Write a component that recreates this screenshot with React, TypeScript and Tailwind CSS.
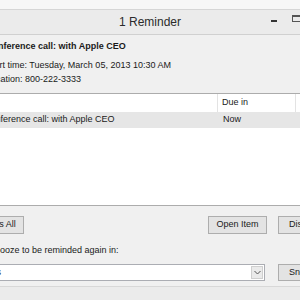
export default function App() {
  return (
    <div className="w-[300px] h-[300px] overflow-hidden bg-[#f0f0f0] text-[9px] text-[#1a1a1a] font-['Liberation_Sans',Arial,sans-serif]">
      <div className="h-[10px] bg-[#f7f7f7] border-b border-[#d6d6d6]" />
      <div className="h-[25px] bg-[#ebebeb] border-b border-[#d0d0d0] grid grid-cols-[1fr_auto_1fr]">
        <div />
        <div className="flex items-center text-[12px] text-[#2b2b2b] leading-none">1 Reminder</div>
        <div className="flex justify-end items-start gap-[15px] -mr-[1px]">
          <div className="mt-[10px] w-[6px] h-[2px] bg-[#333]" />
          <div className="mt-[5px] w-[9px] h-[7px] border border-[#555] border-t-2" />
        </div>
      </div>

      <div className="-ml-[44px] w-[389px] px-[8px]">
        <div className="pl-[22px] pt-[5px]">
          <div className="font-bold leading-[12px] whitespace-nowrap">Conference call: with Apple CEO</div>
          <div className="mt-[7px] leading-[12px] whitespace-nowrap">Start time: Tuesday, March 05, 2013 10:30 AM</div>
          <div className="mt-[2px] leading-[12px] whitespace-nowrap">Location: 800-222-3333</div>
        </div>

        <div className="mt-[8px] h-[113px] bg-white border border-[#acacac]">
          <div className="flex h-[18px] items-center">
            <div className="w-[253px] h-full border-r border-[#e3e3e3]" />
            <div className="w-[78px] h-full pl-[4px] flex items-center border-r border-[#e3e3e3]">Due in</div>
          </div>
          <div className="flex h-[16px] items-center bg-[#e6e6e6]">
            <div className="w-[253px] pl-[19px] whitespace-nowrap">Conference call: with Apple CEO</div>
            <div className="pl-[5px]">Now</div>
          </div>
        </div>

        <div className="mt-[10px] flex h-[18px]">
          <button className="w-[60px] h-full bg-[#e3e3e3] border border-[#adadad] text-[9px]">Dismiss All</button>
          <button className="ml-auto w-[59px] h-full bg-[#e3e3e3] border border-[#adadad] text-[9px]">Open Item</button>
          <button className="ml-[11px] w-[59px] h-full bg-[#e3e3e3] border border-[#adadad] text-[9px] text-left pl-[10px]">Dismiss</button>
        </div>

        <div className="mt-[10px] pl-[3px] leading-[12px] whitespace-nowrap">Click Snooze to be reminded again in:</div>

        <div className="mt-[8px] flex gap-[13px] h-[17px]">
          <div className="flex-1 flex items-center bg-white border border-[#abadb3] overflow-hidden">
            <span className="flex-1 -ml-[3px] whitespace-nowrap">5 minutes</span>
            <span className="w-[12px] h-[13px] mr-[1px] flex items-center justify-center bg-[#eaeaea] border border-[#cfcfcf]">
              <svg width="7" height="5" viewBox="0 0 7 5">
                <path d="M0.5 1 L3.5 4 L6.5 1" fill="none" stroke="#555" strokeWidth="1" />
              </svg>
            </span>
          </div>
          <button className="w-[59px] h-full bg-[#e3e3e3] border border-[#adadad] text-[9px] text-left pl-[10px]">Snooze</button>
        </div>
      </div>

      <div className="mt-[5px] h-[20px] border-t border-[#d8d8d8] bg-[#ebebeb]" />
    </div>
  );
}
